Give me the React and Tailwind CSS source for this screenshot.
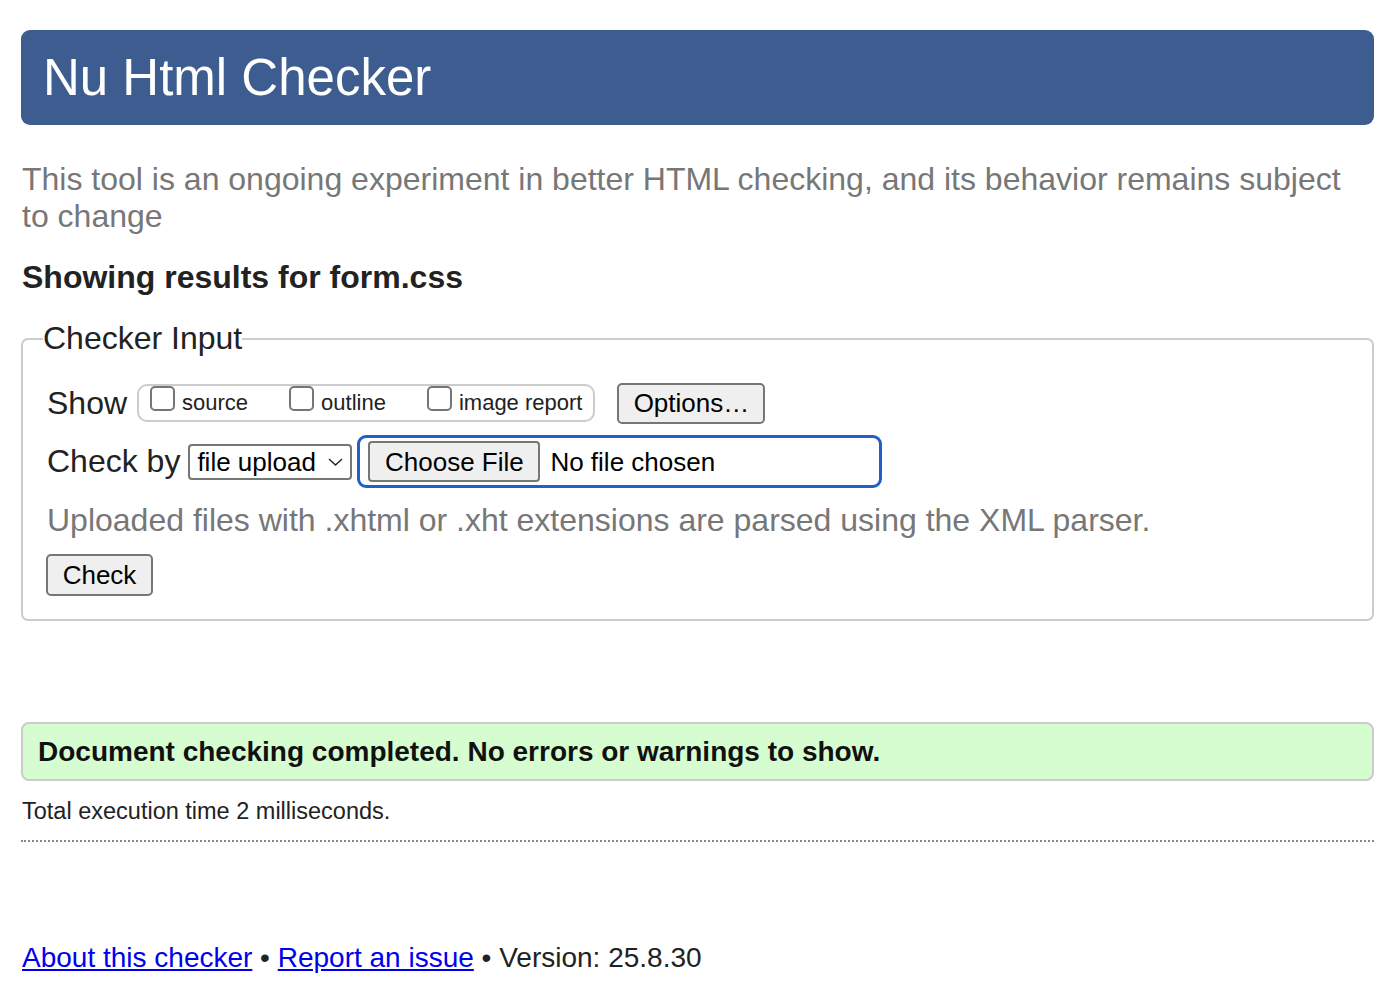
import React from "react";

function Box({ label }) {
  return (
    <span className="flex items-center">
      <span className="mb-[9px] box-border h-[25px] w-[25px] rounded-[5px] border-2 border-[#767676] bg-white" />
      <span className="ml-[7px] text-[22px] leading-[26px] text-[#222]">{label}</span>
    </span>
  );
}

export default function App() {
  return (
    <div className="min-h-[1006px] bg-white pl-[21px] pr-[26px] pt-[30px] font-['Liberation_Sans',Arial,Helvetica,sans-serif] text-[#222]">
      <header className="flex h-[95px] items-center rounded-[9px] bg-[#3d5d91] pl-[22px]">
        <h1 className="text-[51px] leading-none text-white">Nu Html Checker</h1>
      </header>

      <p className="mt-[36px] pl-px text-[32px] leading-[37px] text-[#777]">
        This tool is an ongoing experiment in better HTML checking, and its behavior remains subject to change
      </p>

      <h2 className="mt-[24px] pl-px text-[32px] font-bold leading-[37px] text-[#222]">Showing results for form.css</h2>

      <fieldset className="mt-[24px] rounded-[7px] border-2 border-[#ccc] pb-[23px] pl-[20px] pr-[20px]">
        <legend className="text-[32px] leading-[37px] text-[#222]">Checker Input</legend>

        <div className="pl-[4px]">
          <div className="mt-[25px] flex h-[42px] items-center">
            <span className="text-[32px] leading-[37px]">Show</span>
            <div className="ml-[10px] flex h-[38px] items-center gap-[41px] rounded-[10px] border-2 border-[#ccc] px-[11px]">
              <Box label="source" />
              <Box label="outline" />
              <Box label="image report" />
            </div>
            <button className="ml-[22px] flex h-[41px] w-[148px] items-center justify-center rounded-[5px] border-2 border-[#767676] bg-[#efefef] text-[26px] leading-none text-black">
              Options…
            </button>
          </div>

          <div className="mt-[11px] flex h-[53px] items-center">
            <span className="text-[32px] leading-[37px]">Check by</span>
            <div className="ml-[8px] flex h-[36px] w-[164px] items-center justify-between rounded-[4px] border-2 border-[#767676] pl-[7px] pr-[7px]">
              <span className="text-[26px] leading-none text-black">file upload</span>
              <svg width="15" height="8" viewBox="0 0 15 8" fill="none">
                <path d="M1 1l6.5 6L14 1" stroke="#222" strokeWidth="1.4" />
              </svg>
            </div>
            <div className="ml-[5px] flex h-[53px] w-[525px] items-center rounded-[9px] border-[3px] border-[#2160cb] pl-[8px]">
              <button className="flex h-[41px] w-[172px] items-center justify-center rounded-[4px] border-2 border-[#767676] bg-[#efefef] text-[26px] leading-none text-black">
                Choose File
              </button>
              <span className="ml-[10px] text-[26px] leading-none text-black">No file chosen</span>
            </div>
          </div>

          <p className="mt-[14px] text-[32px] leading-[37px] text-[#777]">
            Uploaded files with .xhtml or .xht extensions are parsed using the XML parser.
          </p>

          <button className="ml-[-1px] mt-[15px] flex h-[42px] w-[107px] items-center justify-center rounded-[5px] border-2 border-[#767676] bg-[#efefef] text-[26px] leading-none text-black">
            Check
          </button>
        </div>
      </fieldset>

      <div className="mt-[101px] flex h-[59px] items-center rounded-[8px] border-2 border-[#ccc] bg-[#d6fdd0] pl-[15px]">
        <p className="text-[28px] font-bold leading-none text-[#111]">
          Document checking completed. No errors or warnings to show.
        </p>
      </div>

      <p className="mt-[16px] pl-px text-[23.5px] leading-[28px] text-[#222]">Total execution time 2 milliseconds.</p>

      <div className="mt-[15px] border-t-2 border-dotted border-[#888]" />

      <p className="mt-[99px] pl-px text-[28px] leading-[33px] text-[#222]">
        <a href="#" className="text-[#0000ee] underline">About this checker</a>
        {" • "}
        <a href="#" className="text-[#0000ee] underline">Report an issue</a>
        {" • Version: 25.8.30"}
      </p>
    </div>
  );
}
